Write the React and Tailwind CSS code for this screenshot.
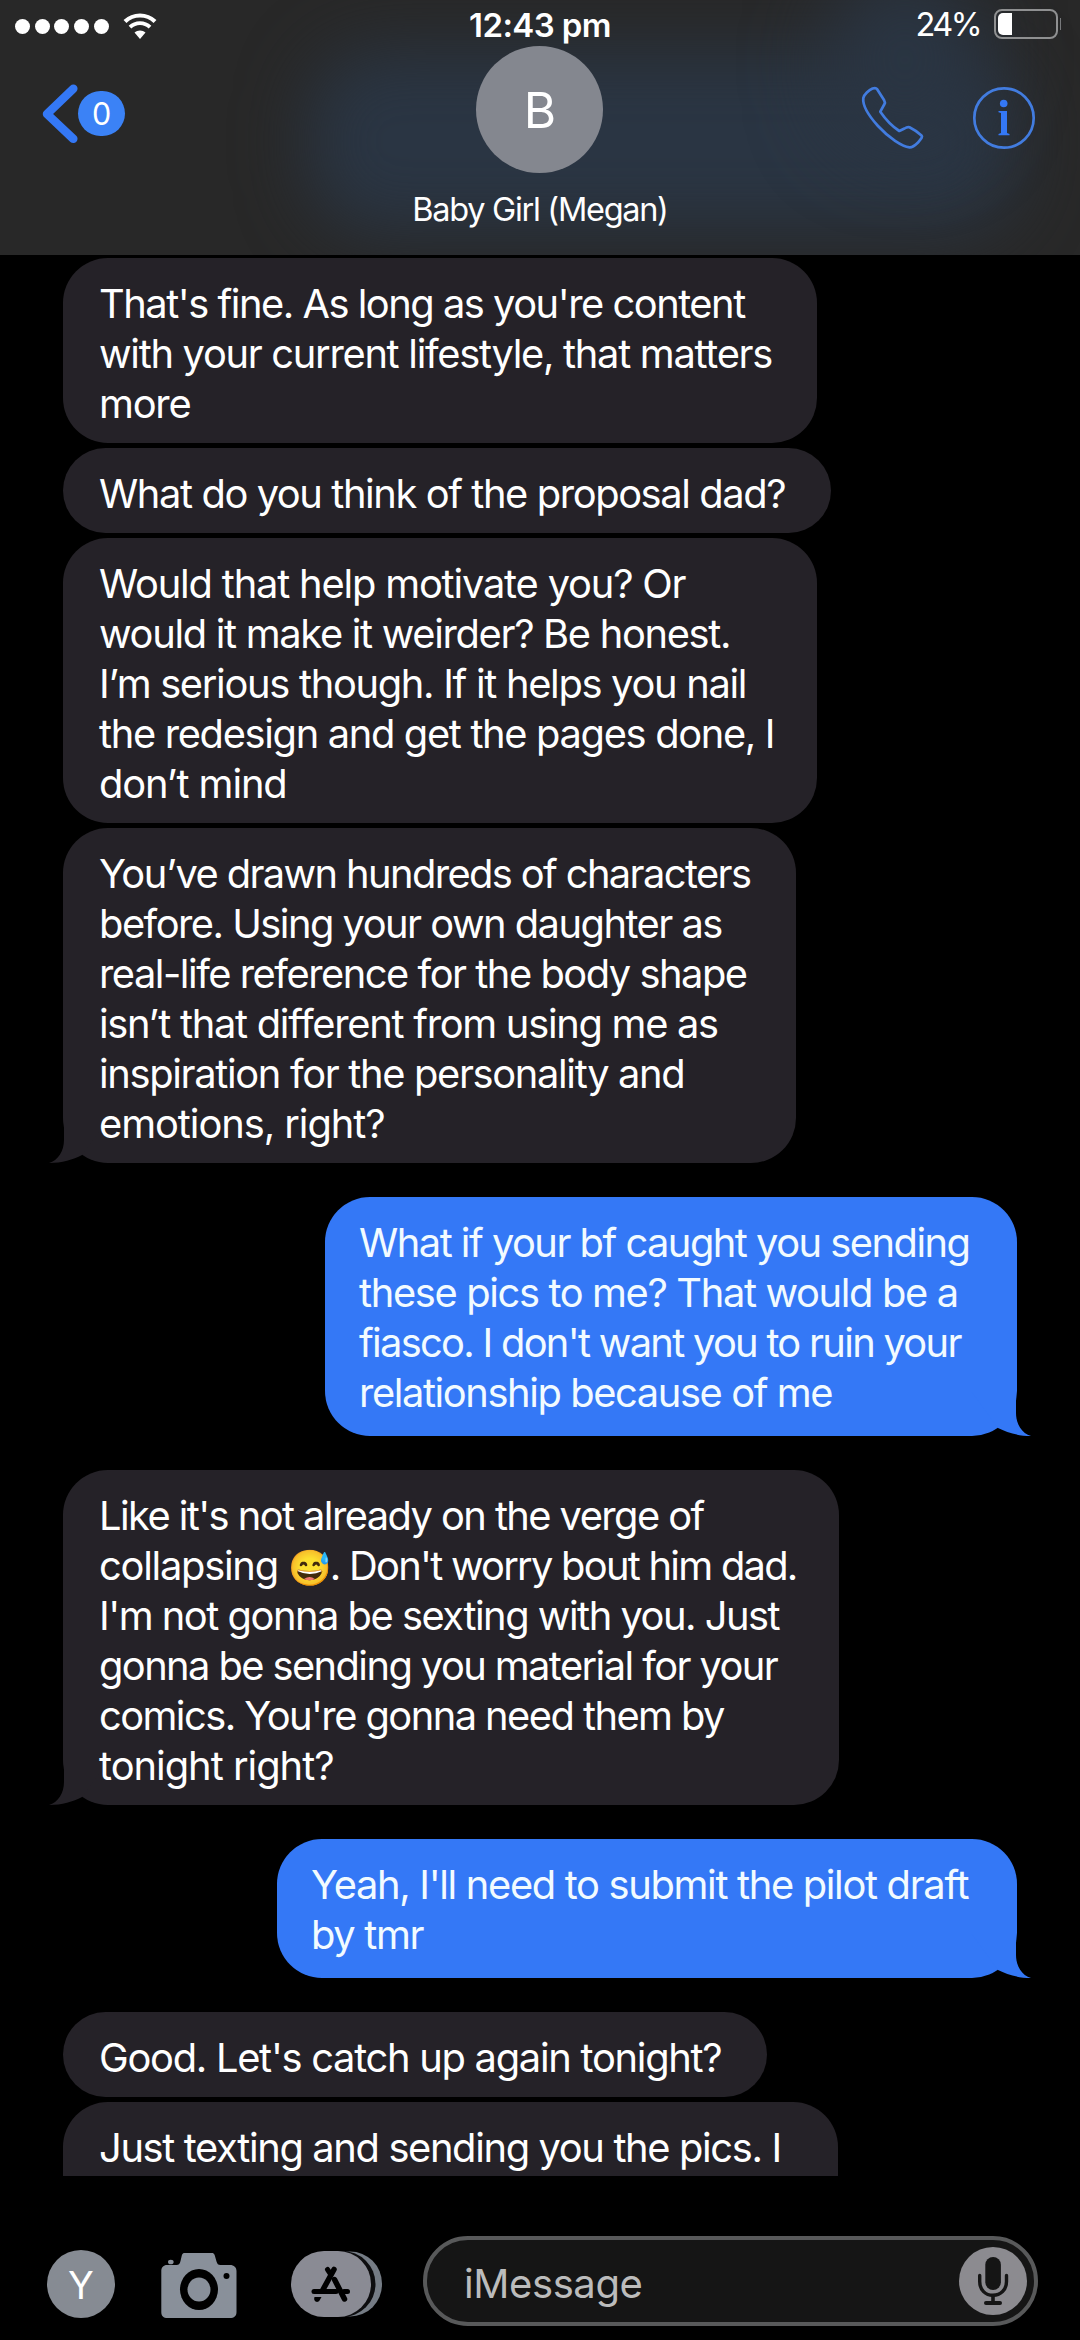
const thread = [
  {
    from: "them",
    size: "w-[754px]",
    lines: [
      ["That's fine. As long as you're content", "tracking-[-1.48px]"],
      ["with your current lifestyle, that matters", "tracking-[-1.29px]"],
      ["more", "tracking-[-1.2px]"],
    ],
  },
  {
    from: "them",
    size: "w-[768px]",
    lines: [["What do you think of the proposal dad?", "tracking-[-1.4px]"]],
  },
  {
    from: "them",
    size: "w-[754px]",
    lines: [
      ["Would that help motivate you? Or", "tracking-[-1.18px]"],
      ["would it make it weirder? Be honest.", "tracking-[-1.31px]"],
      ["I’m serious though. If it helps you nail", "tracking-[-1.3px]"],
      ["the redesign and get the pages done, I", "tracking-[-1.33px]"],
      ["don’t mind", "tracking-[-1.1px]"],
    ],
  },
  {
    from: "them",
    size: "w-[733px]",
    last: true,
    lines: [
      ["You’ve drawn hundreds of characters", "tracking-[-1.61px]"],
      ["before. Using your own daughter as", "tracking-[-1.51px]"],
      ["real-life reference for the body shape", "tracking-[-1.48px]"],
      ["isn’t that different from using me as", "tracking-[-1.28px]"],
      ["inspiration for the personality and", "tracking-[-1.33px]"],
      ["emotions, right?", "tracking-[-1.05px]"],
    ],
  },
  {
    from: "me",
    size: "w-[692px]",
    last: true,
    lines: [
      ["What if your bf caught you sending", "tracking-[-1.51px]"],
      ["these pics to me? That would be a", "tracking-[-1.35px]"],
      ["fiasco. I don't want you to ruin your", "tracking-[-1.7px]"],
      ["relationship because of me", "tracking-[-1.4px]"],
    ],
  },
  {
    from: "them",
    size: "w-[776px]",
    last: true,
    lines: [
      ["Like it's not already on the verge of", "tracking-[-1.57px]"],
      [
        <>
          <span className="tracking-[-1.25px]">collapsing </span>
          <span className="inline-block w-[42px] text-[35px] leading-none tracking-[-4px]">😅</span>. Don't worry bout him dad.
        </>,
        "tracking-[-1.73px]",
      ],
      ["I'm not gonna be sexting with you. Just", "tracking-[-1.48px]"],
      ["gonna be sending you material for your", "tracking-[-1.58px]"],
      ["comics. You're gonna need them by", "tracking-[-1.55px]"],
      ["tonight right?", "tracking-[-1px]"],
    ],
  },
  {
    from: "me",
    size: "w-[740px]",
    last: true,
    lines: [
      ["Yeah, I'll need to submit the pilot draft", "tracking-[-1.32px]"],
      ["by tmr", "tracking-[-1.3px]"],
    ],
  },
  {
    from: "them",
    size: "w-[704px]",
    lines: [["Good. Let's catch up again tonight?", "tracking-[-1.27px]"]],
  },
  {
    from: "them",
    size: "w-[775px]",
    lines: [
      ["Just texting and sending you the pics. I", "tracking-[-1.35px]"],
      ["", ""],
    ],
  },
];

function Tail({ mine }) {
  return (
    <svg
      width="60"
      height="45"
      viewBox="0 0 60 45"
      className={`absolute bottom-0 ${mine ? "-right-[14px] -scale-x-100 fill-[#3478f6]" : "-left-[14px] fill-[#252228]"}`}
    >
      <path d="M15 0V22C15 33 9 42.5 0 45C13 45 24 41.500 33 37L60 0Z" />
    </svg>
  );
}

function Message({ message }) {
  const mine = message.from === "me";
  return (
    <div
      className={`relative shrink-0 rounded-[45px] pt-[21px] ${message.size} ${
        mine ? "self-end bg-[#3478f6] pb-[18px] pl-[34px] text-[#f2fbff]" : "self-start bg-[#252228] pb-[14px] pl-[36px] text-white"
      } ${message.last ? "mb-[34px]" : "mb-[5px]"}`}
    >
      {message.last && <Tail mine={mine} />}
      {message.lines.map(([text, tracking], i) => (
        <p key={i} className={`relative h-[50px] whitespace-nowrap ${tracking}`}>
          {text}
        </p>
      ))}
    </div>
  );
}

function StatusBar() {
  return (
    <div className="relative grid h-[46px] grid-cols-[1fr_auto_1fr] text-[33px] leading-[40px] text-white">
      <div className="flex items-start pl-[15px]">
        <div className="flex gap-[4.700px] pt-[19px]">
          {[1, 2, 3, 4, 5].map((dot) => (
            <span key={dot} className="size-[15px] rounded-full bg-white" />
          ))}
        </div>
        <svg width="34" height="26" viewBox="0 0 34 26" className="mt-[13px] ml-[14px]" fill="none" stroke="white">
          <path d="M2 8.500C10.500 0.500 23.500 0.500 32 8.500" strokeWidth="4.200" />
          <path d="M7 14.200C12.500 8.800 21.500 8.800 27 14.200" strokeWidth="3.800" />
          <path d="M11.500 19.500C14.500 16.700 19.500 16.700 22.500 19.500L17 26Z" fill="white" stroke="none" />
        </svg>
      </div>
      <span className="pt-[5px] font-semibold tracking-[-0.6px]">12:43 pm</span>
      <div className="flex justify-end pr-[19px]">
        <span className="mr-[14px] pt-[5px] text-[32.500px] tracking-[-2.600px]">24%</span>
        <div className="mt-[9px] flex h-[30px] w-[64px] rounded-[8px] border-[2px] border-[#8f9091] p-[2px]">
          <span className="w-[14px] rounded-l-[5px] bg-white" />
        </div>
        <span className="mt-[18px] ml-[2px] h-[12px] w-px bg-[#77797b]" />
      </div>
    </div>
  );
}

function Header() {
  return (
    <header className="relative h-[255px] shrink-0 overflow-hidden bg-[#282828]">
      <div className="absolute top-[50px] left-[308px] h-[182px] w-[710px] rounded-[70px] bg-[#2a3543] blur-[34px]" />
      <div className="absolute -top-[30px] left-[830px] h-[180px] w-[150px] rounded-full bg-[#2a3543] blur-[40px]" />
      <StatusBar />
      <div className="relative grid grid-cols-[1fr_auto_1fr]">
        <div className="flex pl-[42px]">
          <svg width="36" height="60" viewBox="0 0 36 60" className="mt-[38px]" fill="none" stroke="#3478f6" strokeWidth="8.500" strokeLinecap="round" strokeLinejoin="round">
            <path d="M31.300 4.700L5 30L31.300 54.800" />
          </svg>
          <span className="mt-[45px] flex h-[45px] w-[47px] items-center justify-center rounded-full bg-[#3b82f6] text-[30.500px] text-white">0</span>
        </div>
        <div className="flex flex-col items-center text-white">
          <div className="flex size-[127px] items-center justify-center rounded-full bg-[#84878f] pt-[2px] text-[49.500px]">B</div>
          <p className="mt-[17px] text-[32.500px] leading-[40px] tracking-[-1.3px] whitespace-nowrap">Baby Girl (Megan)</p>
        </div>
        <div className="flex justify-end gap-[45px] pt-[39px] pr-[43px]">
          <svg width="66" height="66" viewBox="0 0 66 66" fill="none" stroke="#427cdf" strokeWidth="2.700" strokeLinejoin="round">
            <path d="M12.500 3.500C9 5 4 9.500 3.300 13C2.500 20 8 30 18 41C29 53 42 61.500 49.500 62.300C53 62.500 55 60.500 58 57.500C61 54 63 52 61.500 50.500C58 47.500 53 44 49.500 42.300C47.500 41.500 46 42.500 44.500 43.500L39.300 46C34 42.500 26 35 20.300 26.700L24.500 19C25.500 17.500 24.500 16 24 15L17 4C16 2.600 14 3 12.500 3.500Z" />
          </svg>
          <svg width="66" height="66" viewBox="0 0 66 66" fill="#3478f6">
            <circle cx="33" cy="33" r="29.700" fill="none" stroke="#427cdf" strokeWidth="2.700" />
            <circle cx="32.700" cy="18.500" r="3.800" />
            <path d="M27.500 26H36V48L38.500 49V50.300H27.500V49L30 48V28L27.500 27.300Z" />
          </svg>
        </div>
      </div>
    </header>
  );
}

function CameraIcon() {
  return (
    <svg width="76" height="66" viewBox="0 0 76 66">
      <path
        d="M6 13H15C18 13 18.700 12 19.500 9L20.800 3.500C21.400 1.500 22.300 1 24 1H50.500C52.200 1 53.200 1.500 53.800 3.500L55.500 9.500C56.300 12 57 13 59.500 13H69C73 13 75.500 15.500 75.500 19V60C75.500 64 73 66 69 66H6.500C2.500 66 .3 64 .3 60V19C.3 15.500 2.500 13 6 13Z"
        fill="#89909a"
      />
      <ellipse cx="9.800" cy="10" rx="2.800" ry="2.300" fill="#89909a" />
      <ellipse cx="38" cy="37.500" rx="19" ry="20.500" fill="black" />
      <ellipse cx="38" cy="37.500" rx="11.500" ry="12" fill="#89909a" />
      <circle cx="65.500" cy="24" r="3" fill="black" />
    </svg>
  );
}

function AppStoreIcon() {
  return (
    <svg width="92" height="66" viewBox="0 0 92 66">
      <rect x="27" y="0.500" width="64" height="65" rx="32" fill="#757c85" />
      <rect x="5" y="0" width="79.500" height="66" rx="33" fill="#0d0d0f" />
      <rect x="0" y="0" width="80" height="66" rx="33" fill="#8a8b94" />
      <g stroke="black" strokeWidth="5" strokeLinecap="round" fill="none">
        <path d="M36.500 18.500L39.500 23" />
        <path d="M43 18.500L31.500 39.500" strokeWidth="5.500" />
        <path d="M23 40.500H45" />
        <path d="M53 40.500H56.500" />
        <path d="M43.500 28.500L53.500 48" strokeWidth="5.500" />
      </g>
      <path d="M23.500 46H30.500L28.500 49.500C26.500 52.500 22 50.500 23.500 46Z" fill="black" />
    </svg>
  );
}

function Composer() {
  return (
    <footer className="flex h-[164px] shrink-0 items-start pl-[47px]">
      <span className="mt-[74px] flex size-[68px] items-center justify-center rounded-full bg-[#868b93] pt-[2px] text-[38px] text-white">Y</span>
      <div className="mt-[76px] ml-[46px]">
        <CameraIcon />
      </div>
      <div className="mt-[75px] ml-[54px]">
        <AppStoreIcon />
      </div>
      <div className="mt-[60px] ml-[40px] flex h-[90px] w-[615px] items-center justify-between rounded-full border-[4px] border-[#58595a] bg-[#151515] pr-[7px] pl-[37px]">
        <span className="pt-[5px] text-[40px] tracking-[-0.4px] text-[#bcbcbc]">iMessage</span>
        <svg width="68" height="68" viewBox="0 0 68 68" fill="none" stroke="#151515" strokeLinecap="round">
          <circle cx="34" cy="34" r="34" fill="#8c8b90" stroke="none" />
          <rect x="26.300" y="10" width="15.600" height="33" rx="7.800" fill="#151515" stroke="none" />
          <path d="M20.700 28.500V34.500C20.700 43 26.500 48.300 34 48.300S47.500 43 47.500 34.500V28.500" strokeWidth="3.400" />
          <path d="M34 49V56" strokeWidth="3.600" strokeLinecap="butt" />
          <path d="M27 56H41" strokeWidth="4" />
        </svg>
      </div>
    </footer>
  );
}

export default function App() {
  return (
    <div className="flex h-[2340px] w-[1080px] flex-col overflow-hidden bg-black font-['Inter',sans-serif]">
      <Header />
      <main className="flex h-[1921px] shrink-0 flex-col overflow-hidden pt-[3px] pr-[63px] pl-[63px] text-[39.850px] leading-[50px]">
        {thread.map((message, i) => (
          <Message key={i} message={message} />
        ))}
      </main>
      <Composer />
    </div>
  );
}
